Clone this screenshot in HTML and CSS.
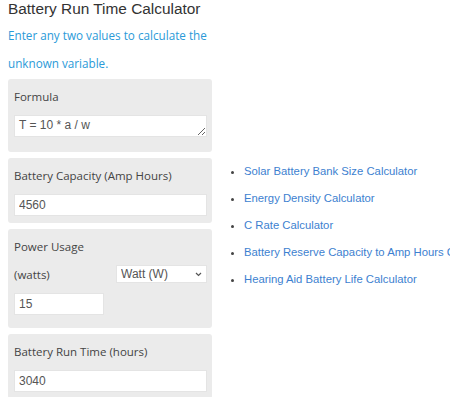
FILE: index.html
```html
<!DOCTYPE html>
<html lang="en">
<head>
<meta charset="UTF-8">
<meta name="viewport" content="width=device-width, initial-scale=1.0">
<title>Battery Run Time Calculator</title>
<link rel="stylesheet" href="styles.css">
</head>
<body>

<div class="page">
    <!-- Calculator column -->
    <div class="calc">
        <h1>Battery Run Time Calculator</h1>
        <p class="intro">Enter any two values to calculate the unknown variable.</p>

        <div class="field">
            <label>Formula</label>
            <textarea class="formula" rows="1">T = 10 * a / w</textarea>
        </div>

        <div class="field">
            <label>Battery Capacity (Amp Hours)</label>
            <input type="text" value="4560">
        </div>

        <div class="field">
            <label>Power Usage</label>
            <div class="unit-row">
                <label>(watts)</label>
                <div class="select-wrap">
                    <select>
                        <option>Watt (W)</option>
                        <option>Kilowatt (kW)</option>
                    </select>
                    <svg class="chevron" width="7" height="5" viewBox="0 0 7 5"><path d="M1 1l2.5 2.5L6 1" fill="none" stroke="#555" stroke-width="1.2"/></svg>
                </div>
            </div>
            <input type="text" class="short" value="15">
        </div>

        <div class="field">
            <label>Battery Run Time (hours)</label>
            <input type="text" value="3040">
        </div>
    </div>

    <!-- Related calculators -->
    <ul class="related">
        <li><a href="#">Solar Battery Bank Size Calculator</a></li>
        <li><a href="#">Energy Density Calculator</a></li>
        <li><a href="#">C Rate Calculator</a></li>
        <li><a href="#">Battery Reserve Capacity to Amp Hours Calculator</a></li>
        <li><a href="#">Hearing Aid Battery Life Calculator</a></li>
    </ul>
</div>

</body>
</html>
```

FILE: styles.css
```css
* {
    box-sizing: border-box;
}
body {
    margin: 0;
    background-color: #fff;
    font-family: "Liberation Sans", Arial, sans-serif;
    overflow: hidden;
}
.page {
    display: flex;
    padding: 0 8px;
    width: 450px;
    overflow: hidden;
}
.calc {
    width: 204px;
    flex-shrink: 0;
}
h1 {
    margin: 0;
    padding-top: 0;
    font-size: 15.4px;
    font-weight: normal;
    line-height: 18px;
    color: #333;
}
.intro {
    margin: 3px 0 2px;
    font-family: "Open Sans", sans-serif;
    font-size: 11.7px;
    line-height: 28px;
    color: #2b9ad8;
}
.field {
    background-color: #ebebeb;
    border-radius: 3px;
    padding: 4px 5px 7px 6px;
    margin-bottom: 6px;
    display: flex;
    flex-direction: column;
}
.field label {
    font-family: "Open Sans", sans-serif;
    font-size: 11.5px;
    line-height: 28px;
    color: #444;
}
.field input,
.field textarea {
    margin-top: 4px;
    height: 22px;
    padding: 2px 4px;
    border: 1px solid #e4e4e4;
    background-color: #fff;
    font-family: "Liberation Sans", Arial, sans-serif;
    font-size: 12px;
    color: #555;
}
.field textarea {
    display: block;
    resize: vertical;
    overflow: hidden;
    margin-bottom: 8px;
}
.field input.short {
    width: 90px;
    margin-top: 4px;
    margin-bottom: 6px;
}
.unit-row {
    display: flex;
    justify-content: space-between;
    align-items: center;
}
.select-wrap {
    position: relative;
    margin-top: -2px;
}
.select-wrap select {
    display: block;
    width: 91px;
    height: 18px;
    padding: 0 0 0 4px;
    border: 1px solid #e4e4e4;
    border-radius: 0;
    background-color: #fff;
    appearance: none;
    font-family: "Liberation Sans", Arial, sans-serif;
    font-size: 12px;
    color: #555;
}
.chevron {
    position: absolute;
    right: 5px;
    top: 7px;
    pointer-events: none;
}
.related {
    margin: 0;
    padding: 158px 0 0 32px;
    list-style: disc;
    white-space: nowrap;
}
.related li {
    font-size: 11.3px;
    line-height: 27px;
    color: #444;
}
.related a {
    color: #3d7fd0;
    text-decoration: none;
}
```
